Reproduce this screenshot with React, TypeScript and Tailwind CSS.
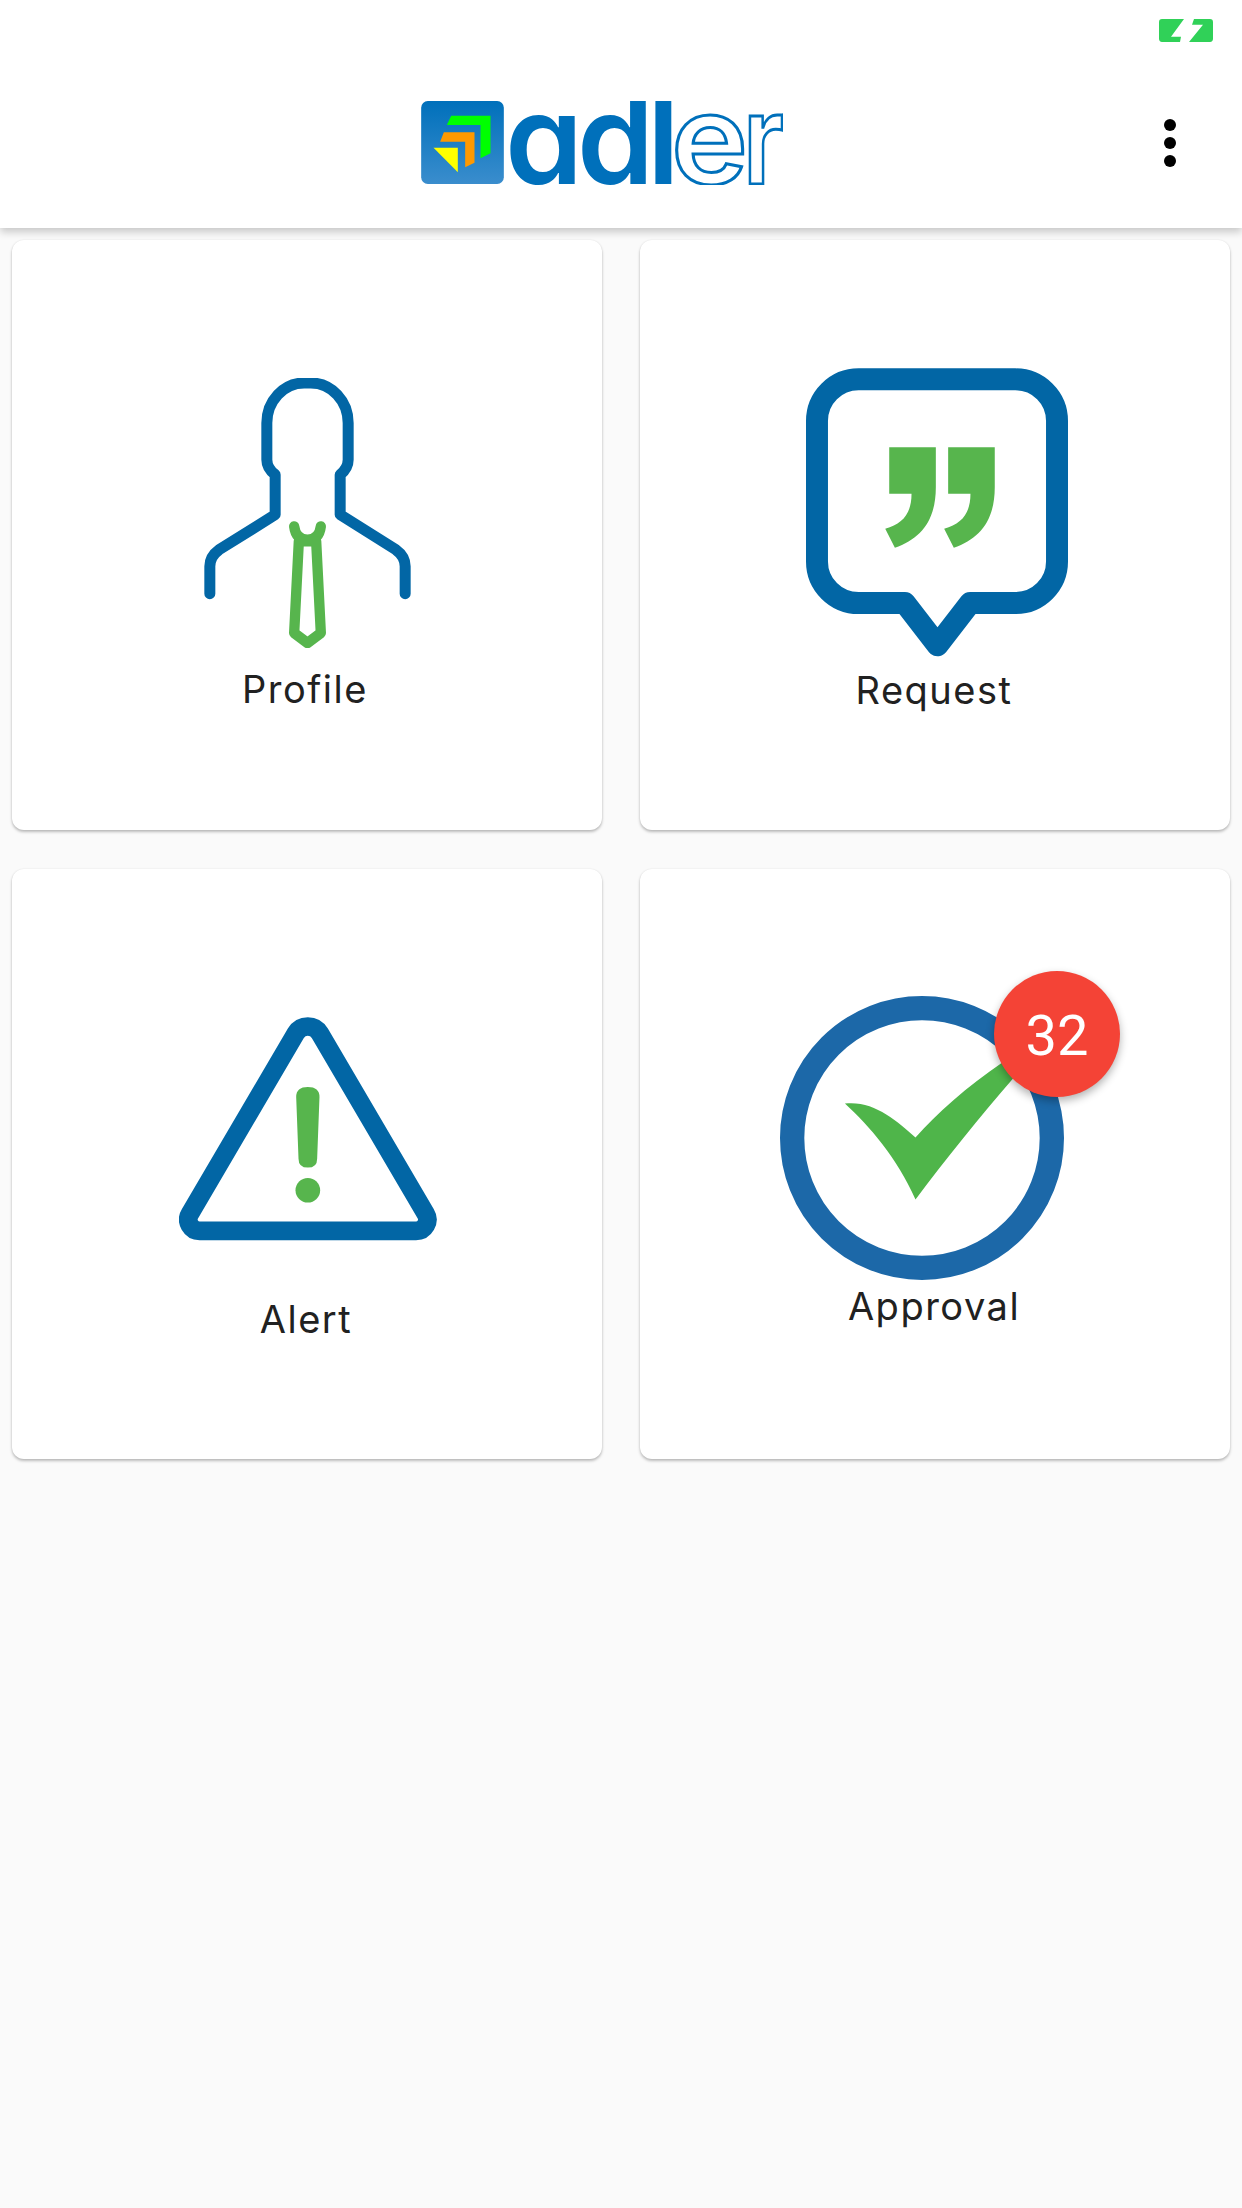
const BLUE = "#0266a5";
const GREEN = "#57b54d";

function StatusIcon() {
  return (
    <svg width="54" height="23" viewBox="0 0 54 22" preserveAspectRatio="none">
      <path d="M3 0H25L12 17H22L21 22H3Q0 22 0 19V3Q0 0 3 0Z" fill="#30d158" />
      <path d="M35 0H51Q54 0 54 3V19Q54 22 51 22H30L44 5.5H33Z" fill="#30d158" />
    </svg>
  );
}

function Logo() {
  const lab = "font-['Inter','Liberation_Sans',sans-serif] font-semibold [font-feature-settings:'cv11']";
  return (
    <svg width="362" height="84" viewBox="0 0 362 84">
      <defs>
        <linearGradient id="lg" x1="0" y1="0" x2="0" y2="1">
          <stop offset="0" stopColor="#0070bb" />
          <stop offset="1" stopColor="#3a8dcd" />
        </linearGradient>
        <clipPath id="lc"><rect x="0" y="0" width="362" height="84" /></clipPath>
      </defs>
      <svg x="0" y="0" width="83" height="83" viewBox="30 33 248 249">
        <rect x="30" y="33" width="248" height="249" rx="20" ry="20" fill="url(#lg)" />
        <polygon points="120,77 238,77 238,190 208,205 208,105 107,105" fill="#00ff00" />
        <polygon points="98,127 190,127 190,218 162,232 162,155 87,155" fill="#ff9900" />
        <polygon points="67,173 140,173 140,247" fill="#ffff00" />
      </svg>
      <g clipPath="url(#lc)" fontSize="125" className={lab} fill="#0070bb">
        <text x="84" y="83" textLength="78" lengthAdjust="spacingAndGlyphs">a</text>
        <text x="156" y="83" textLength="77" lengthAdjust="spacingAndGlyphs">d</text>
        <text x="226" y="83">l</text>
        <text x="250" y="83" textLength="77" lengthAdjust="spacingAndGlyphs" fill="#fff" stroke="#0070bb" strokeWidth="3">e</text>
        <text x="322" y="83" textLength="41" lengthAdjust="spacingAndGlyphs" fill="#fff" stroke="#0070bb" strokeWidth="3">r</text>
      </g>
    </svg>
  );
}

function ProfileIcon() {
  return (
    <svg width="207" height="270" viewBox="160 115 620 810" fill="none" strokeLinecap="round" strokeLinejoin="round">
      <path d="M177 762V680Q177 650 205 630L373 525V405Q348 385 348 360V250A112 120 0 0 1 460 130H480A112 120 0 0 1 592 250V360Q592 385 568 405V525L735 630Q763 650 763 680V762" stroke={BLUE} strokeWidth="33" />
      <path d="M430 560Q435 600 470 600Q505 600 510 560" stroke={GREEN} strokeWidth="31" />
      <path d="M444 605H496L510 880L470 910L430 880Z" stroke={GREEN} strokeWidth="31" />
    </svg>
  );
}

function RequestIcon() {
  return (
    <svg width="263" height="292" viewBox="135 83 790 875" fill="none">
      <path d="M293 116H764A125 125 0 0 1 889 241V663A125 125 0 0 1 764 788H628L530 915L432 788H293A125 125 0 0 1 168 663V241A125 125 0 0 1 293 116Z" stroke={BLUE} strokeWidth="66" strokeLinejoin="round" />
      <path d="M385 320H525V440C525 540 480 595 402 622L373 565C425 550 452 520 452 460H385Z" fill={GREEN} />
      <path d="M562 320H702V440C702 540 657 595 579 622L550 565C602 550 629 520 629 460H562Z" fill={GREEN} />
    </svg>
  );
}

function AlertIcon() {
  return (
    <svg width="258" height="224" viewBox="88 80 775 672" fill="none">
      <path d="M150 722H800A34 34 0 0 0 829.1 670.5L511 128.4A42 42 0 0 0 439 128.4L120.9 670.5A34 34 0 0 0 150 722Z" stroke={BLUE} strokeWidth="56" />
      <path d="M440 320Q440 290 475 290Q510 290 510 320L503 505Q503 532 475 532Q447 532 447 505Z" fill={GREEN} />
      <circle cx="475" cy="600" r="37" fill={GREEN} />
    </svg>
  );
}

function ApprovalIcon() {
  return (
    <svg width="284" height="284" viewBox="90 137 853 853" fill="none">
      <circle cx="516.5" cy="563.5" r="390" stroke="#1c68a8" strokeWidth="73" />
      <path d="M285 460C370 450 440 510 497 562C560 490 650 410 760 335L790 385C690 500 590 625 497 748C440 620 360 530 285 460Z" fill="#4fb54a" />
    </svg>
  );
}

const label = "text-[#212121] text-[38px] leading-[46px] tracking-[1.5px] font-['Inter',sans-serif]";
const card = "relative h-[590px] bg-white rounded-xl shadow-[0_2px_3px_rgba(0,0,0,0.25),0_0_2px_rgba(0,0,0,0.08)] flex flex-col items-center";

export default function App() {
  return (
    <div className="min-h-[2208px] w-[1242px] bg-[#fafafa]">
      <header className="relative z-10 h-[228px] bg-white shadow-[0_4px_8px_rgba(0,0,0,0.2)] pt-[19px]">
        <div className="flex justify-end pr-[29px]">
          <StatusIcon />
        </div>
        <div className="mt-[59px] flex items-center justify-between pl-[421px] pr-[66px]">
          <Logo />
          <div className="flex flex-col gap-[6px]">
            <span className="h-3 w-3 rounded-full bg-black" />
            <span className="h-3 w-3 rounded-full bg-black" />
            <span className="h-3 w-3 rounded-full bg-black" />
          </div>
        </div>
      </header>
      <main className="grid grid-cols-2 gap-x-[38px] gap-y-[39px] px-3 pt-3">
        <section className={card + " pt-[138px]"}>
          <ProfileIcon />
          <span className={label + " mt-[18px] -ml-[4px]"}>Profile</span>
        </section>
        <section className={card + " pt-[128px]"}>
          <div className="ml-[4px]"><RequestIcon /></div>
          <span className={label + " mt-[7px] -ml-[2px]"}>Request</span>
        </section>
        <section className={card + " pt-[148px]"}>
          <div className="ml-[2px]"><AlertIcon /></div>
          <span className={label + " mt-[55px] -ml-[2px]"}>Alert</span>
        </section>
        <section className={card + " pt-[127px]"}>
          <div className="relative mr-[26px]">
            <ApprovalIcon />
            <div className="absolute left-[214px] top-[-25px] flex h-[126px] w-[126px] items-center justify-center rounded-full bg-[#f44336] pt-[3px] text-[56px] text-white shadow-[0_4px_8px_rgba(0,0,0,0.3)] font-['Roboto',sans-serif]">32</div>
          </div>
          <span className={label + " mt-[3px] -ml-[2px]"}>Approval</span>
        </section>
      </main>
    </div>
  );
}
